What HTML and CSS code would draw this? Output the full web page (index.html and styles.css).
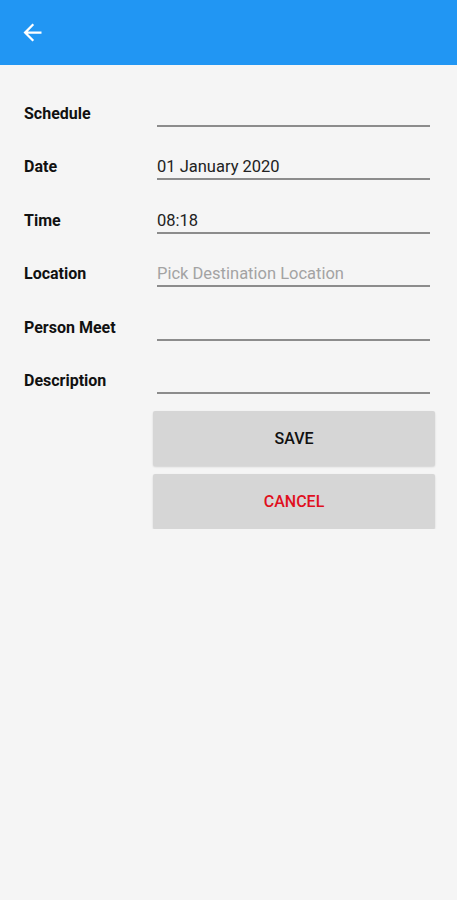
FILE: index.html
```html
<!DOCTYPE html>
<html lang="en">
<head>
  <meta charset="UTF-8">
  <title>Schedule</title>
  <link rel="stylesheet" href="styles.css">
</head>
<body>

<div class="toolbar">
  <svg class="back" viewBox="0 0 24 24" width="27" height="27">
    <path fill="#fff" d="M20 11H7.83l5.59-5.59L12 4l-8 8 8 8 1.41-1.41L7.83 13H20v-2z"/>
  </svg>
</div>

<div class="form">
  <div class="row">
    <div class="label">Schedule</div>
    <div class="field"></div>
  </div>
  <div class="row">
    <div class="label">Date</div>
    <div class="field">01 January 2020</div>
  </div>
  <div class="row">
    <div class="label">Time</div>
    <div class="field">08:18</div>
  </div>
  <div class="row">
    <div class="label">Location</div>
    <div class="field hint">Pick Destination Location</div>
  </div>
  <div class="row">
    <div class="label">Person Meet</div>
    <div class="field"></div>
  </div>
  <div class="row">
    <div class="label">Description</div>
    <div class="field"></div>
  </div>

  <div class="actions">
    <button class="btn">SAVE</button>
    <button class="btn cancel">CANCEL</button>
  </div>
</div>

</body>
</html>
```

FILE: styles.css
```css
body {
  font-family: Roboto, "Liberation Sans", sans-serif;
  background-color: #f5f5f5;
  margin: 0;
  padding: 0;
}
.toolbar {
  height: 65px;
  background-color: #2196f3;
  display: flex;
  align-items: center;
  padding-left: 19px;
}
.back {
  display: block;
}
.form {
  padding: 8px 27px 0 24px;
}
.row {
  display: flex;
  align-items: flex-end;
  height: 53.5px;
}
.label {
  flex: 0 0 133px;
  font-size: 16px;
  font-weight: bold;
  color: #111;
  line-height: 24px;
  padding-bottom: 1px;
}
.field {
  flex: 1;
  height: 25px;
  line-height: 27px;
  font-size: 16.5px;
  color: #222;
  border-bottom: 2px solid #8c8c8c;
}
.field.hint {
  color: #a3a3a3;
}
.actions {
  display: flex;
  flex-direction: column;
  gap: 8px;
  margin: 17px -5px 0 129px;
}
.btn {
  height: 55px;
  border: none;
  border-radius: 2px;
  background-color: #d6d6d6;
  box-shadow: 0 1px 2px rgba(0, 0, 0, 0.15);
  font-family: Roboto, "Liberation Sans", sans-serif;
  font-size: 16px;
  font-weight: 500;
  color: #111;
}
.btn.cancel {
  color: #e0101e;
}
```
